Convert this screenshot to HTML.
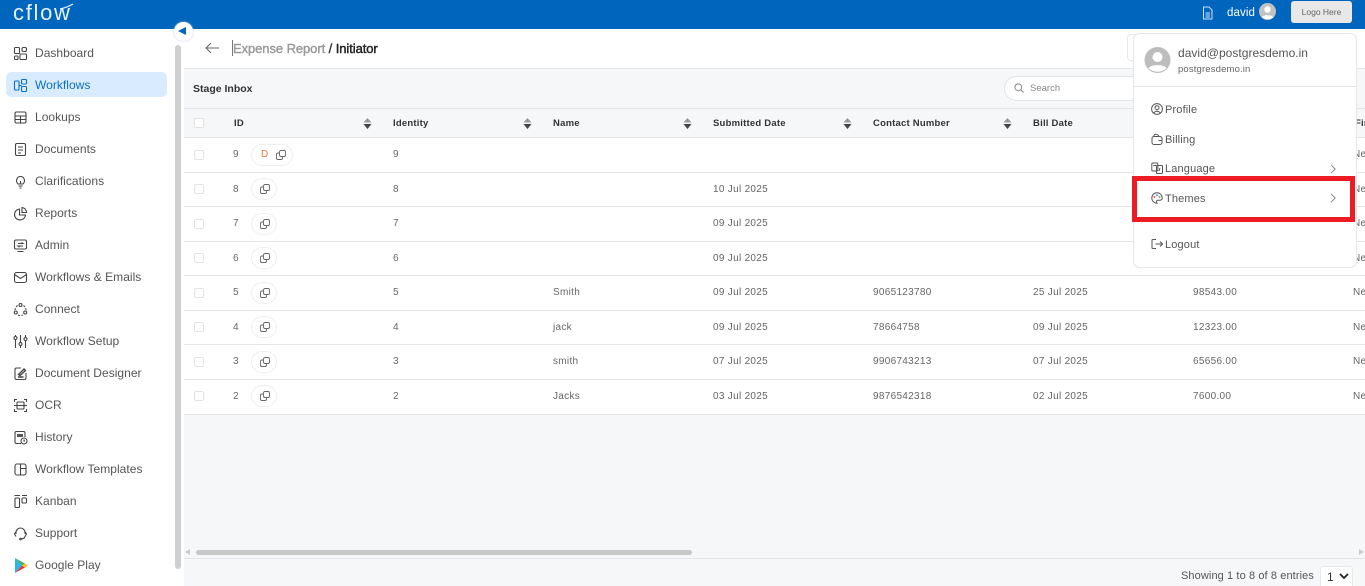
<!DOCTYPE html>
<html><head><meta charset="utf-8"><style>
*{box-sizing:border-box}
html,body{margin:0;padding:0}
body{width:1365px;height:586px;overflow:hidden;position:relative;background:#fff;font-family:"Liberation Sans",sans-serif;color:#555}
.a{position:absolute;white-space:nowrap}
#top{left:0;top:0;width:1365px;height:29px;background:#0065bd}
.nav{left:35px;font-size:12px;line-height:16px;color:#555;letter-spacing:.03px}
.ic{position:absolute;left:13px;width:15px;height:15px;fill:none;stroke:#444;stroke-width:1.1}
.th{font-size:9.5px;font-weight:bold;color:#333;line-height:12px;top:117px;margin-top:.5px;letter-spacing:.22px}
.td{font-size:10px;color:#666;line-height:12px;letter-spacing:.3px;margin-top:2px}
.hl{left:184px;width:1181px;height:1px;background:#e3e5e8}
.cb{left:194px;width:10px;height:10px;border:1px solid #e3e3e3;border-radius:2px;background:#fff}
.sort{top:118px;width:9px;height:11px}
.pill{height:22px;border:1px solid #eee;border-radius:11px;background:#fff}
.mi{left:1165px;font-size:11px;color:#555;line-height:14px;letter-spacing:.15px;margin-top:1px}
.mic{position:absolute;left:1151px;width:12px;height:12px;fill:none;stroke:#555;stroke-width:1}
.chev{position:absolute;left:1329px;width:8px;height:10px;fill:none;stroke:#888;stroke-width:1}
</style></head><body>
<div class="a" style="left:184px;top:29px;width:1181px;height:557px;background:#f6f7f9"></div>
<div class="a" style="left:184px;top:29px;width:1181px;height:40px;background:#fff;border-bottom:1px solid #e3e5e8"></div>
<div class="a" id="top"></div>
<div class="a" style="left:13px;top:0;font-size:22px;line-height:26px;color:#e8f1fa;letter-spacing:1.7px">cflow</div>
<svg class="a" style="left:59px;top:3px;width:15px;height:8px" viewBox="0 0 15 8"><path d="M1 6Q8 4.5 14 1" fill="none" stroke="#e8f1fa" stroke-width="1.3"/></svg>

<svg class="a" style="left:1202px;top:6px;width:11px;height:14px" viewBox="0 0 11 14" fill="none" stroke="#cfe2f5" stroke-width="1"><path d="M1.5 1H7L10 4V13H1.5Z"/><path d="M3.5 7H8M3.5 9H8M3.5 11H8"/></svg>
<div class="a" style="left:1227px;top:6px;font-size:11.5px;line-height:15px;color:#fff;letter-spacing:.1px">david</div>
<svg class="a" style="left:1259px;top:3px;width:17px;height:17px" viewBox="0 0 17 17"><circle cx="8.5" cy="8.5" r="8.5" fill="#c2c2c2"/><circle cx="8.5" cy="6.5" r="3.2" fill="#fff"/><path d="M2.8 14.5C3.5 11.5 13.5 11.5 14.2 14.5Q8.5 18 2.8 14.5Z" fill="#fff"/></svg>
<div class="a" style="left:1291px;top:1px;width:61px;height:22px;background:#e8e8e8;border-radius:3px;font-size:8.5px;line-height:22px;text-align:center;color:#666">Logo Here</div>

<!-- sidebar -->
<div class="a" style="left:6px;top:72px;width:161px;height:25px;background:#d9ecff;border-radius:5px"></div>
<div class="a" style="left:175px;top:45px;width:6px;height:524px;background:#cfcfcf;border-radius:3px"></div>
<div class="a" style="left:174px;top:22px;width:19px;height:19px;background:#fff;border-radius:50%;box-shadow:0 0 2px #bcd"></div>
<div class="a" style="left:178px;top:27px;width:0;height:0;border-top:4.5px solid transparent;border-bottom:4.5px solid transparent;border-right:8px solid #0065bd"></div>

<div class="a nav" style="top:45px">Dashboard</div>
<div class="a nav" style="top:77px;color:#0a6fc2">Workflows</div>
<div class="a nav" style="top:109px">Lookups</div>
<div class="a nav" style="top:141px">Documents</div>
<div class="a nav" style="top:173px">Clarifications</div>
<div class="a nav" style="top:205px">Reports</div>
<div class="a nav" style="top:237px">Admin</div>
<div class="a nav" style="top:269px">Workflows &amp; Emails</div>
<div class="a nav" style="top:301px">Connect</div>
<div class="a nav" style="top:333px">Workflow Setup</div>
<div class="a nav" style="top:365px">Document Designer</div>
<div class="a nav" style="top:397px">OCR</div>
<div class="a nav" style="top:429px">History</div>
<div class="a nav" style="top:461px">Workflow Templates</div>
<div class="a nav" style="top:493px">Kanban</div>
<div class="a nav" style="top:525px">Support</div>
<div class="a nav" style="top:557px">Google Play</div>

<svg class="ic" style="top:46px" viewBox="0 0 15 15"><rect x="1.5" y="1.5" width="5" height="6" rx="1"/><rect x="9" y="1.5" width="4.5" height="4" rx="1.5"/><rect x="1.5" y="10" width="3.5" height="3.5" rx="1"/><rect x="7" y="8" width="6.5" height="5.5" rx="1"/></svg>
<svg class="ic" style="top:78px;stroke:#0a6fc2" viewBox="0 0 15 15"><rect x="1.5" y="3" width="4.5" height="9" rx="1"/><rect x="8.5" y="1.5" width="5" height="4.5" rx="1"/><rect x="8.5" y="8.5" width="5" height="5" rx="1"/><path d="M6 7.5H8.5"/></svg>
<svg class="ic" style="top:110px" viewBox="0 0 15 15"><rect x="2" y="2" width="11" height="11" rx="1.5"/><path d="M2 6H13M2 9.5H13M7.5 6V13"/></svg>
<svg class="ic" style="top:142px" viewBox="0 0 15 15"><rect x="2.5" y="1.5" width="10" height="12" rx="1.5"/><path d="M5 5H10M5 8H10M5 11H8"/></svg>
<svg class="ic" style="top:174px" viewBox="0 0 15 15"><path d="M5 10C2 7 4 2.5 7.5 2.5S13 7 10 10Z"/><path d="M5.5 12H9.5M6.5 14H8.5M7.5 10V7"/></svg>
<svg class="ic" style="top:206px" viewBox="0 0 15 15"><path d="M6.5 3A5.5 5.5 0 1 0 12.5 9H6.5Z"/><path d="M9 1.5A5 5 0 0 1 13.5 6.5H9Z"/></svg>
<svg class="ic" style="top:238px" viewBox="0 0 15 15"><rect x="1.5" y="2" width="12" height="9" rx="1.5"/><path d="M4.5 13.5H10.5M5 5.5H10L8.5 4.5M10 8H5L6.5 9"/></svg>
<svg class="ic" style="top:270px" viewBox="0 0 15 15"><rect x="1.5" y="2.5" width="12" height="10" rx="2"/><path d="M1.5 4.5L7.5 8.5L13.5 4.5"/></svg>
<svg class="ic" style="top:302px" viewBox="0 0 15 15"><circle cx="7.5" cy="3" r="1.5"/><circle cx="2.8" cy="10.5" r="1.5"/><circle cx="12.2" cy="10.5" r="1.5"/><path stroke-dasharray="2 1.5" d="M4.5 3.5Q2.5 5 2 8M10.5 3.5Q12.5 5 13 8M5 13Q7.5 14 10 13"/></svg>
<svg class="ic" style="top:334px" viewBox="0 0 15 15"><path d="M2.5 1V14M7.5 1V14M12.5 1V14"/><circle cx="2.5" cy="4" r="1.5" fill="#fff"/><circle cx="7.5" cy="10" r="1.5" fill="#fff"/><circle cx="12.5" cy="5" r="1.5" fill="#fff"/></svg>
<svg class="ic" style="top:366px" viewBox="0 0 15 15"><path d="M8 2H3.5Q2 2 2 3.5V12Q2 13.5 3.5 13.5H11.5Q13 13.5 13 12V7"/><path d="M5 11H10.5M5.5 8.5L11 3L12.5 4.5L7 9.5Z" stroke-width="1.4"/></svg>
<svg class="ic" style="top:398px" viewBox="0 0 15 15"><path d="M1.5 4V1.5H4M11 1.5H13.5V4M1.5 11V13.5H4M11 13.5H13.5V11"/><rect x="4" y="4" width="7" height="7" rx="1"/><path d="M1 7.5H14"/></svg>
<svg class="ic" style="top:430px" viewBox="0 0 15 15"><path d="M8 13.5H3.5Q2 13.5 2 12V3Q2 1.5 3.5 1.5H10.5Q12 1.5 12 3V7"/><rect x="4" y="4" width="6" height="3" fill="#555" stroke="none"/><circle cx="11" cy="11" r="3"/><path d="M11 9.5V11H12"/></svg>
<svg class="ic" style="top:462px" viewBox="0 0 15 15"><rect x="2" y="2" width="11" height="11" rx="2"/><path d="M7.5 2V13M7.5 6.5H13"/></svg>
<svg class="ic" style="top:494px" viewBox="0 0 15 15"><path d="M1.5 1.5H7M9 1.5H14"/><rect x="2" y="4" width="4.5" height="9.5" rx="1"/><rect x="9" y="4" width="4.5" height="5" rx="1"/></svg>
<svg class="ic" style="top:526px" viewBox="0 0 15 15"><path d="M3 8V6.5A4.5 4.5 0 0 1 12 6.5V8"/><path d="M3 5.5L1.5 8L3 10.5M12 5.5L13.5 8L12 10.5M12 10.5Q11 13 8 13"/><circle cx="7.5" cy="13" r=".8"/></svg>
<svg class="a" style="left:14px;top:558px;width:14px;height:15px" viewBox="0 0 14 15"><path d="M1 0V15L8 7.5Z" fill="#29b6e8"/><path d="M1 0L11 5.5L8 7.5Z" fill="#4caf50"/><path d="M1 15L11 9.5L8 7.5Z" fill="#e53935"/><path d="M11 5.5L14 7.5L11 9.5L8 7.5Z" fill="#fbc02d"/></svg>

<!-- header -->
<svg class="a" style="left:205px;top:42px;width:14px;height:12px" viewBox="0 0 14 12"><path d="M14 6H1M6 1L1 6L6 11" fill="none" stroke="#666" stroke-width="1"/></svg>
<div class="a" style="left:232px;top:40px;width:1px;height:16px;background:#777"></div>
<div class="a" style="left:233px;top:40px;font-size:13px;line-height:17px;color:#999;letter-spacing:-.08px;-webkit-text-stroke:.4px #999">Expense Report <span style="color:#333;-webkit-text-stroke:.4px #333">/</span> <span style="color:#222;-webkit-text-stroke:.45px #222">Initiator</span></div>
<div class="a" style="left:1127px;top:34px;width:20px;height:27px;background:#fff;border:1px solid #e8e8e8;border-radius:4px"></div>

<!-- stage inbox -->
<div class="a" style="left:193px;top:82px;font-size:10.5px;line-height:14px;font-weight:bold;color:#333">Stage Inbox</div>
<div class="a" style="left:1004px;top:76px;width:140px;height:25px;background:#fff;border:1px solid #e3e5e8;border-radius:13px"></div>
<svg class="a" style="left:1014px;top:83px;width:10px;height:10px" viewBox="0 0 10 10"><circle cx="4.3" cy="4.3" r="3.4" fill="none" stroke="#888"/><path d="M7 7L9.5 9.5" stroke="#888"/></svg>
<div class="a" style="left:1030px;top:83px;font-size:9.5px;line-height:12px;color:#888">Search</div>

<!-- table -->
<div class="a" style="left:184px;top:108px;width:1181px;height:306px;background:#fff"></div>
<div class="a" style="left:184px;top:108px;width:1181px;height:30px;background:#f6f7f9"></div>
<div class="a hl" style="top:108px"></div>
<div class="a hl" style="top:137px"></div>
<div class="a hl" style="top:172px"></div>
<div class="a hl" style="top:206px"></div>
<div class="a hl" style="top:241px"></div>
<div class="a hl" style="top:275px"></div>
<div class="a hl" style="top:310px"></div>
<div class="a hl" style="top:344px"></div>
<div class="a hl" style="top:379px"></div>
<div class="a hl" style="top:414px"></div>

<div class="a cb" style="top:118px"></div>
<div class="a th" style="left:234px">ID</div>
<div class="a th" style="left:393px">Identity</div>
<div class="a th" style="left:553px">Name</div>
<div class="a th" style="left:713px">Submitted Date</div>
<div class="a th" style="left:873px">Contact Number</div>
<div class="a th" style="left:1033px">Bill Date</div>
<div class="a th" style="left:1355px">Fir</div>
<svg class="a sort" style="left:363px" viewBox="0 0 9 11"><path d="M4.5 0L8.5 4.5H.5Z" fill="#999"/><path d="M4.5 11L8.5 6H.5Z" fill="#444"/></svg>
<svg class="a sort" style="left:523px" viewBox="0 0 9 11"><path d="M4.5 0L8.5 4.5H.5Z" fill="#999"/><path d="M4.5 11L8.5 6H.5Z" fill="#444"/></svg>
<svg class="a sort" style="left:683px" viewBox="0 0 9 11"><path d="M4.5 0L8.5 4.5H.5Z" fill="#999"/><path d="M4.5 11L8.5 6H.5Z" fill="#444"/></svg>
<svg class="a sort" style="left:843px" viewBox="0 0 9 11"><path d="M4.5 0L8.5 4.5H.5Z" fill="#999"/><path d="M4.5 11L8.5 6H.5Z" fill="#444"/></svg>
<svg class="a sort" style="left:1003px" viewBox="0 0 9 11"><path d="M4.5 0L8.5 4.5H.5Z" fill="#999"/><path d="M4.5 11L8.5 6H.5Z" fill="#444"/></svg>

<div class="a cb" style="top:150px"></div><div class="a td" style="left:233px;top:147px">9</div><div class="a td" style="left:393px;top:147px">9</div><div class="a td" style="left:1353px;top:147px">Ne</div>
<div class="a pill" style="left:251px;top:144px;width:42px"></div><div class="a td" style="left:261px;top:147px;color:#f07a3a">D</div>
<div class="a cb" style="top:184px"></div><div class="a td" style="left:233px;top:182px">8</div><div class="a td" style="left:393px;top:182px">8</div><div class="a td" style="left:713px;top:182px">10 Jul 2025</div><div class="a td" style="left:1353px;top:182px">Ne</div>
<div class="a pill" style="left:251px;top:178px;width:26px"></div>
<div class="a cb" style="top:219px"></div><div class="a td" style="left:233px;top:216px">7</div><div class="a td" style="left:393px;top:216px">7</div><div class="a td" style="left:713px;top:216px">09 Jul 2025</div><div class="a td" style="left:1353px;top:216px">Ne</div>
<div class="a pill" style="left:251px;top:213px;width:26px"></div>
<div class="a cb" style="top:253px"></div><div class="a td" style="left:233px;top:251px">6</div><div class="a td" style="left:393px;top:251px">6</div><div class="a td" style="left:713px;top:251px">09 Jul 2025</div><div class="a td" style="left:1353px;top:251px">Ne</div>
<div class="a pill" style="left:251px;top:247px;width:26px"></div>
<div class="a cb" style="top:288px"></div><div class="a td" style="left:233px;top:285px">5</div><div class="a td" style="left:393px;top:285px">5</div><div class="a td" style="left:553px;top:285px">Smith</div><div class="a td" style="left:713px;top:285px">09 Jul 2025</div><div class="a td" style="left:873px;top:285px">9065123780</div><div class="a td" style="left:1033px;top:285px">25 Jul 2025</div><div class="a td" style="left:1193px;top:285px">98543.00</div><div class="a td" style="left:1353px;top:285px">Ne</div>
<div class="a pill" style="left:251px;top:282px;width:26px"></div>
<div class="a cb" style="top:322px"></div><div class="a td" style="left:233px;top:320px">4</div><div class="a td" style="left:393px;top:320px">4</div><div class="a td" style="left:553px;top:320px">jack</div><div class="a td" style="left:713px;top:320px">09 Jul 2025</div><div class="a td" style="left:873px;top:320px">78664758</div><div class="a td" style="left:1033px;top:320px">09 Jul 2025</div><div class="a td" style="left:1193px;top:320px">12323.00</div><div class="a td" style="left:1353px;top:320px">Ne</div>
<div class="a pill" style="left:251px;top:316px;width:26px"></div>
<div class="a cb" style="top:357px"></div><div class="a td" style="left:233px;top:354px">3</div><div class="a td" style="left:393px;top:354px">3</div><div class="a td" style="left:553px;top:354px">smith</div><div class="a td" style="left:713px;top:354px">07 Jul 2025</div><div class="a td" style="left:873px;top:354px">9906743213</div><div class="a td" style="left:1033px;top:354px">07 Jul 2025</div><div class="a td" style="left:1193px;top:354px">65656.00</div><div class="a td" style="left:1353px;top:354px">Ne</div>
<div class="a pill" style="left:251px;top:351px;width:26px"></div>
<div class="a cb" style="top:391px"></div><div class="a td" style="left:233px;top:389px">2</div><div class="a td" style="left:393px;top:389px">2</div><div class="a td" style="left:553px;top:389px">Jacks</div><div class="a td" style="left:713px;top:389px">03 Jul 2025</div><div class="a td" style="left:873px;top:389px">9876542318</div><div class="a td" style="left:1033px;top:389px">02 Jul 2025</div><div class="a td" style="left:1193px;top:389px">7600.00</div><div class="a td" style="left:1353px;top:389px">Ne</div>
<div class="a pill" style="left:251px;top:385px;width:26px"></div>

<svg class="a" style="left:276px;top:150px;width:10px;height:10px" viewBox="0 0 10 10" fill="none" stroke="#666" stroke-width=".9"><rect x="3.5" y=".5" width="6" height="6" rx="1.5"/><path d="M3 3H2Q.5 3 .5 4.5V8Q.5 9.5 2 9.5H5Q6.5 9.5 6.5 8V7"/></svg>
<svg class="a" style="left:260px;top:184px;width:10px;height:10px" viewBox="0 0 10 10" fill="none" stroke="#666" stroke-width=".9"><rect x="3.5" y=".5" width="6" height="6" rx="1.5"/><path d="M3 3H2Q.5 3 .5 4.5V8Q.5 9.5 2 9.5H5Q6.5 9.5 6.5 8V7"/></svg>
<svg class="a" style="left:260px;top:219px;width:10px;height:10px" viewBox="0 0 10 10" fill="none" stroke="#666" stroke-width=".9"><rect x="3.5" y=".5" width="6" height="6" rx="1.5"/><path d="M3 3H2Q.5 3 .5 4.5V8Q.5 9.5 2 9.5H5Q6.5 9.5 6.5 8V7"/></svg>
<svg class="a" style="left:260px;top:253px;width:10px;height:10px" viewBox="0 0 10 10" fill="none" stroke="#666" stroke-width=".9"><rect x="3.5" y=".5" width="6" height="6" rx="1.5"/><path d="M3 3H2Q.5 3 .5 4.5V8Q.5 9.5 2 9.5H5Q6.5 9.5 6.5 8V7"/></svg>
<svg class="a" style="left:260px;top:288px;width:10px;height:10px" viewBox="0 0 10 10" fill="none" stroke="#666" stroke-width=".9"><rect x="3.5" y=".5" width="6" height="6" rx="1.5"/><path d="M3 3H2Q.5 3 .5 4.5V8Q.5 9.5 2 9.5H5Q6.5 9.5 6.5 8V7"/></svg>
<svg class="a" style="left:260px;top:322px;width:10px;height:10px" viewBox="0 0 10 10" fill="none" stroke="#666" stroke-width=".9"><rect x="3.5" y=".5" width="6" height="6" rx="1.5"/><path d="M3 3H2Q.5 3 .5 4.5V8Q.5 9.5 2 9.5H5Q6.5 9.5 6.5 8V7"/></svg>
<svg class="a" style="left:260px;top:357px;width:10px;height:10px" viewBox="0 0 10 10" fill="none" stroke="#666" stroke-width=".9"><rect x="3.5" y=".5" width="6" height="6" rx="1.5"/><path d="M3 3H2Q.5 3 .5 4.5V8Q.5 9.5 2 9.5H5Q6.5 9.5 6.5 8V7"/></svg>
<svg class="a" style="left:260px;top:391px;width:10px;height:10px" viewBox="0 0 10 10" fill="none" stroke="#666" stroke-width=".9"><rect x="3.5" y=".5" width="6" height="6" rx="1.5"/><path d="M3 3H2Q.5 3 .5 4.5V8Q.5 9.5 2 9.5H5Q6.5 9.5 6.5 8V7"/></svg>

<!-- scrollbar / footer -->
<div class="a" style="left:185px;top:549px;width:0;height:0;border-top:3px solid transparent;border-bottom:3px solid transparent;border-right:5px solid #ccc"></div>
<div class="a" style="left:196px;top:550px;width:496px;height:5px;background:#c8c8c8;border-radius:3px"></div>
<div class="a" style="left:1359px;top:549px;width:0;height:0;border-top:3px solid transparent;border-bottom:3px solid transparent;border-left:5px solid #ccc"></div>
<div class="a hl" style="top:558px"></div>
<div class="a" style="left:1181px;top:569px;font-size:11px;line-height:14px;color:#555;letter-spacing:.1px">Showing 1 to 8 of 8 entries</div>
<div class="a" style="left:1320px;top:566px;width:33px;height:20px;background:#fff;border:1px solid #e8e8e8;border-bottom:0;border-radius:3px 3px 0 0"></div>
<div class="a" style="left:1327px;top:570px;font-size:12px;line-height:15px;color:#333">1</div>
<svg class="a" style="left:1339px;top:573px;width:10px;height:7px" viewBox="0 0 10 7"><path d="M1 1L5 5L9 1" fill="none" stroke="#222" stroke-width="1.8"/></svg>

<!-- dropdown -->
<div class="a" style="left:1133px;top:33px;width:224px;height:235px;background:#fff;border:1px solid #e6e6e6;border-radius:7px"></div>
<div class="a" style="left:1134px;top:86px;width:222px;height:1px;background:#e6e6e6"></div>
<svg class="a" style="left:1144px;top:47px;width:27px;height:26px" viewBox="0 0 27 26"><circle cx="13.5" cy="13" r="13" fill="#bdbdbd"/><circle cx="13.5" cy="10" r="5" fill="#fff"/><path d="M4.5 21.5C6 17 21 17 22.5 21.5Q13.5 28 4.5 21.5Z" fill="#fff"/></svg>
<div class="a" style="left:1178px;top:45px;font-size:12px;line-height:16px;color:#555;letter-spacing:.02px">david@postgresdemo.in</div>
<div class="a" style="left:1178px;top:63px;font-size:9.5px;line-height:13px;color:#666;letter-spacing:.15px">postgresdemo.in</div>

<div class="a mi" style="top:102px">Profile</div>
<div class="a mi" style="top:132px">Billing</div>
<div class="a mi" style="top:161px">Language</div>
<div class="a mi" style="top:191px">Themes</div>
<div class="a mi" style="top:237px">Logout</div>
<svg class="mic" style="top:103px" viewBox="0 0 12 12"><circle cx="6" cy="6" r="5.4"/><circle cx="6" cy="4.7" r="2"/><path d="M2.5 10Q6 6.5 9.5 10"/></svg>
<svg class="mic" style="top:133px" viewBox="0 0 12 12"><rect x="1" y="3.5" width="10" height="8" rx="2"/><path d="M3 3.5V2Q5 .5 7 2L8 3.5M7.5 7.5H11"/></svg>
<svg class="mic" style="top:162px" viewBox="0 0 12 12"><rect x=".8" y="1" width="6" height="8" rx="1"/><rect x="5.5" y="3.5" width="6" height="8" rx="1"/><path d="M2.3 3.5H5.3M8 9L9 6"/></svg>
<svg class="mic" style="top:192px" viewBox="0 0 12 12"><path d="M6 .8A5.2 5.2 0 1 0 6 11.2Q4.6 9 6.5 8.2H9Q11.2 8.2 11.2 6A5.2 5.2 0 0 0 6 .8Z"/><circle cx="3.5" cy="5" r=".5" stroke="#e06060"/><circle cx="6" cy="3.2" r=".5" stroke="#6080e0"/><circle cx="8.5" cy="5" r=".5" stroke="#60b060"/></svg>
<svg class="mic" style="top:238px" viewBox="0 0 12 12"><path d="M5 1.5H2Q1 1.5 1 2.5V9.5Q1 10.5 2 10.5H5M4.5 6H11.5M9 3.5L11.5 6L9 8.5"/></svg>
<svg class="chev" style="top:164px" viewBox="0 0 8 10"><path d="M2 .8L6.2 5L2 9.2"/></svg>
<svg class="chev" style="top:193px" viewBox="0 0 8 10"><path d="M2 .8L6.2 5L2 9.2"/></svg>
<div class="a" style="left:1132px;top:176px;width:223px;height:46px;border:5px solid #ed1c24"></div>
</body></html>
